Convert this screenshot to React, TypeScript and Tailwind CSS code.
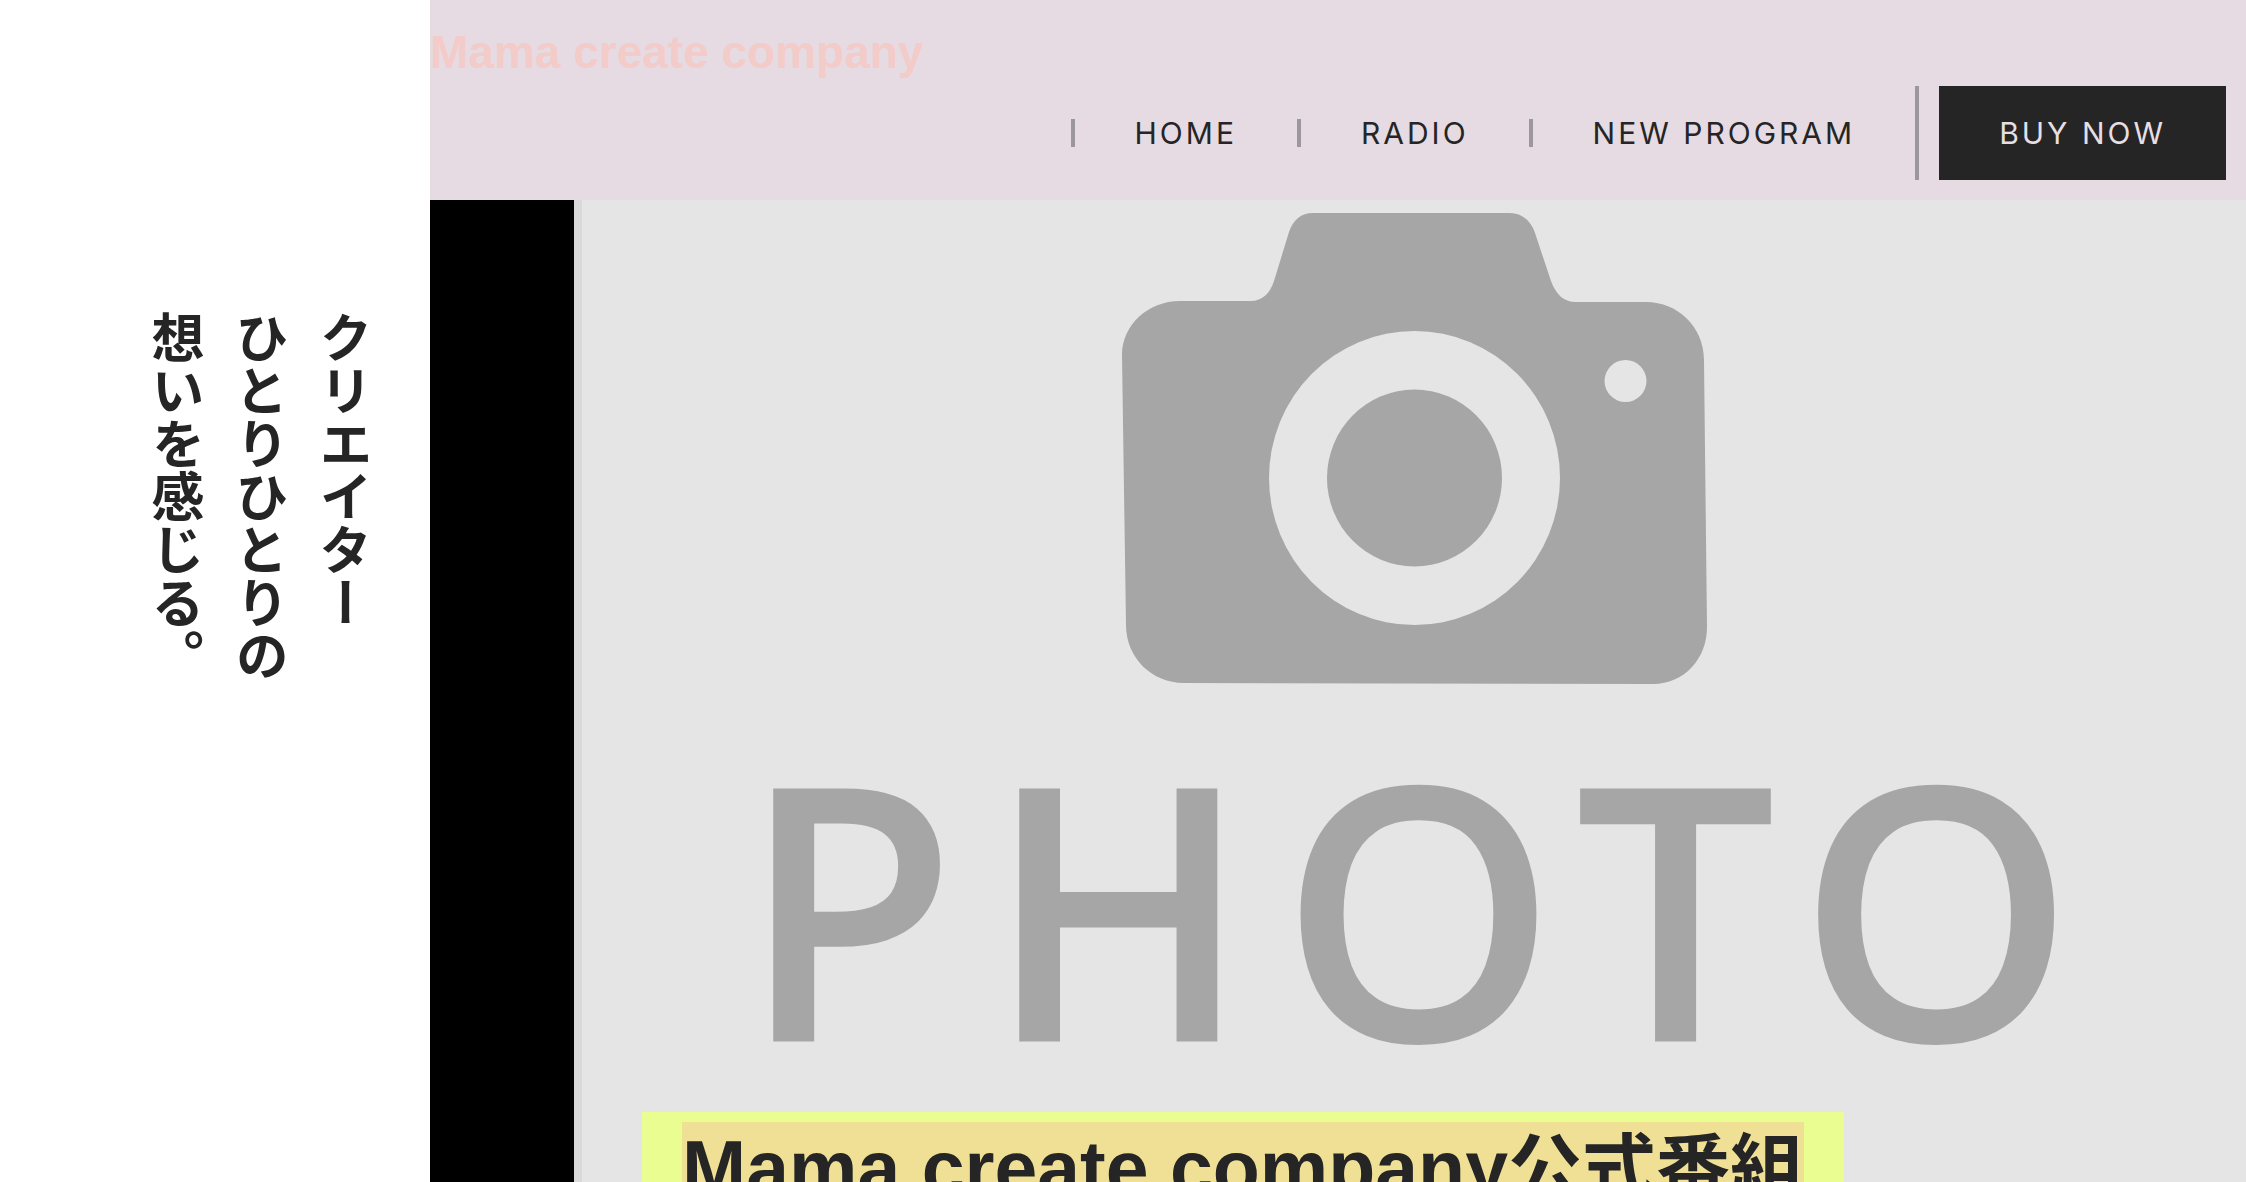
const navItems = [
  { label: "HOME", href: "#home" },
  { label: "RADIO", href: "#radio" },
  { label: "NEW PROGRAM", href: "#new-program" },
];

const PhotoPlaceholder = () => (
  <svg
    viewBox="574 200 1672 982"
    preserveAspectRatio="xMidYMin slice"
    className="block h-full w-full"
    role="img"
    aria-label="PHOTO"
  >
    <rect x="574" y="200" width="8" height="982" fill="#dadada" />
    <path
      fill="#a6a6a6"
      d="M1313 213H1510C1522 213 1531 221 1535 233L1551 281C1556 294 1563 302 1576 302H1646C1678 302 1704 327 1704 360L1707 627C1707 659 1684 684 1653 684L1184 683C1152 683 1126 658 1126 625L1122 355C1122 325 1148 301 1180 301H1251C1263 301 1270 293 1274 281L1289 232C1293 220 1301 213 1313 213Z"
    />
    <ellipse cx="1414.5" cy="478" rx="145.5" ry="147" fill="#e5e5e5" />
    <ellipse cx="1414.5" cy="478" rx="87.5" ry="88.5" fill="#a6a6a6" />
    <circle cx="1625.5" cy="381" r="21" fill="#e5e5e5" />
    <text
      x="742"
      y="1040"
      fill="#a6a6a6"
      stroke="#a6a6a6"
      strokeWidth="3"
      className="font-['Noto_Sans',sans-serif] text-[350px] font-medium tracking-[32px]"
    >
      PHOTO
    </text>
  </svg>
);

const Header = () => (
  <header className="flex h-[200px] shrink-0 flex-col justify-between bg-[#e6dbe3] pt-6 pb-5">
    <h1 className="font-['Liberation_Sans',sans-serif] text-[46px] leading-[56px] font-bold text-[#f3cbc8]">
      <a href="#home">Mama create company</a>
    </h1>
    <nav className="-mt-4 pr-5">
      <ul className="flex items-center justify-end font-[Inter,sans-serif] text-[30px] leading-7 text-[#252525]">
        {navItems.map((item) => (
          <li key={item.label} className="border-l-4 border-[#9c979b] px-[60px]">
            <a href={item.href} className="tracking-widest">
              {item.label}
            </a>
          </li>
        ))}
        <li className="border-l-4 border-[#9c979b] pl-5">
          <button
            type="button"
            className="block h-[94px] bg-[#252525] px-[60px] tracking-widest text-[#e6dfe3]"
          >
            BUY NOW
          </button>
        </li>
      </ul>
    </nav>
  </header>
);

const App = () => {
  return (
    <div className="flex h-screen overflow-hidden bg-white text-[#252525]">
      <aside className="flex w-[430px] shrink-0 justify-end pt-[311px] pr-[42px]">
        <p className="font-['Noto_Sans_CJK_JP',sans-serif] text-[53px] leading-[84px] font-bold [writing-mode:vertical-rl]">
          クリエイター
          <br />
          ひとりひとりの
          <br />
          想いを感じる。
        </p>
      </aside>

      <div className="flex min-w-0 flex-1 flex-col">
        <Header />
        <main className="min-h-0 flex-1 bg-black pl-36">
          <div className="relative h-full overflow-hidden bg-[#e5e5e5]">
            <PhotoPlaceholder />
            <h2 className="absolute top-[912px] left-[68px] bg-[#e9fd91] px-10 py-[10px] font-['Liberation_Sans','Noto_Sans_CJK_JP',sans-serif] text-[77px] leading-[92px] font-bold whitespace-nowrap">
              <span className="block bg-[#efe096]">
                Mama create company<span className="text-[74px]">公式番組</span>
              </span>
            </h2>
          </div>
        </main>
      </div>
    </div>
  );
};

export default App;
